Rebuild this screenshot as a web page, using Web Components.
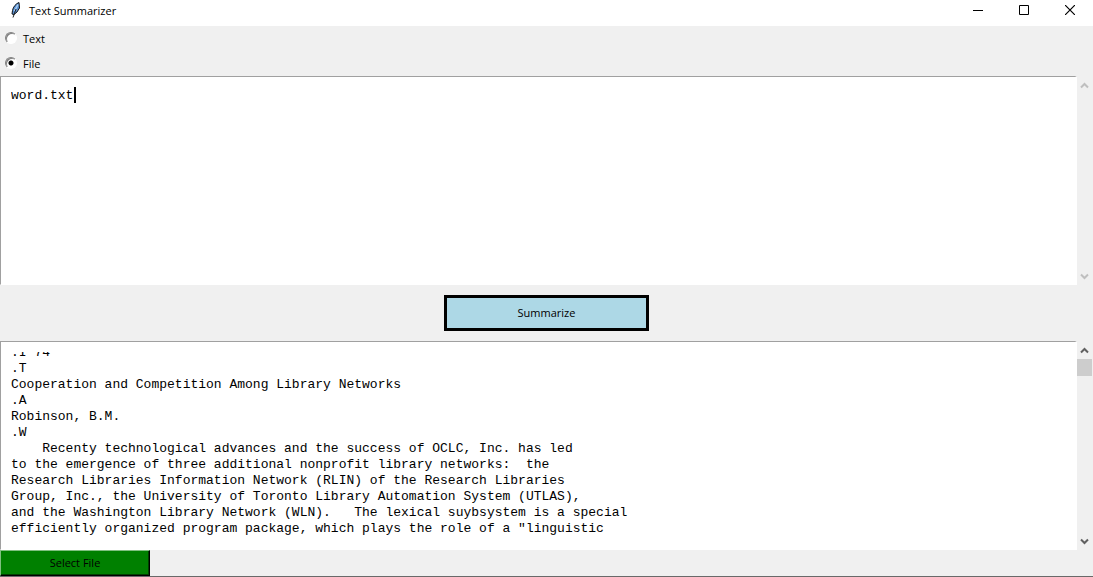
<!DOCTYPE html>
<html lang="en">
<head>
<meta charset="utf-8">
<title>Text Summarizer</title>
<style>
  body { margin: 0; background: #f0f0f0; color: #000; font: 11px/16px "Open Sans", "Noto Sans", sans-serif; }
</style>
</head>
<body>
<summarizer-app></summarizer-app>
<script>
class BaseElement extends HTMLElement {
  constructor() {
    super();
    this.attachShadow({ mode: 'open' }).innerHTML =
      '<style>*{box-sizing:border-box}button{font:inherit;color:inherit;padding:0;margin:0;border:0;border-radius:0}</style>' + this.template();
  }
}

customElements.define('title-bar', class extends BaseElement {
  template() {
    return `<style>
      :host { display: flex; align-items: flex-start; height: 26px; padding-left: 8px; background: #fff; }
      .icon { width: 16px; height: 16px; margin: 2px 5px 0 0; }
      h1 { flex: 1; margin: 3px 0 0; font: inherit; }
      button { width: 46px; height: 20px; background: none; display: grid; place-items: center; }
    </style>
    <svg class="icon" viewBox="0 0 16 16" aria-hidden="true">
      <path d="M11 .5C8 1.500 5 5 4.500 8.500L4 12l2 .500 3-2.500L11.500 6z" fill="#5a8fd0" stroke="#101418" stroke-width="1"/>
      <path d="M10 2.500 6.500 9" stroke="#a9d0f5" stroke-width="1.500"/>
      <path d="M8 7 5 15.500" stroke="#222" stroke-width="1"/>
    </svg>
    <h1><slot></slot></h1>
    <button aria-label="Minimize"><svg width="10" height="10"><path d="M0 5.500h10" stroke="#000"/></svg></button>
    <button aria-label="Maximize"><svg width="10" height="10"><path d="M.500.500h9v9h-9z" fill="none" stroke="#000"/></svg></button>
    <button aria-label="Close"><svg width="10" height="10"><path d="M0 0 10 10M10 0 0 10" stroke="#000" stroke-width="1.200"/></svg></button>`;
  }
});

customElements.define('source-options', class extends BaseElement {
  template() {
    return `<style>
      :host { display: block; }
      label { display: flex; align-items: center; gap: 6px; height: 25px; padding-left: 5px; }
      input { appearance: none; width: 12px; height: 12px; margin: 0 0 2px; border: 1px solid; border-color: #808080 #fff #fff #808080;
        border-radius: 50%; background: #fff; box-shadow: inset 1px 1px #808080; }
      input:checked { background: radial-gradient(circle, #000 2px, #fff 3px); }
    </style>
    <label><input type="radio" name="source" value="text">Text</label>
    <label><input type="radio" name="source" value="file" checked>File</label>`;
  }
});

customElements.define('scroll-rail', class extends BaseElement {
  template() {
    return `<style>
      :host { display: flex; flex-direction: column; width: 16px; padding-top: 1px; color: #606060; }
      :host([disabled]) { color: #bfbfbf; }
      button { height: 17px; width: 15px; background: none; display: grid; place-items: center; }
      .track { flex: 1; }
      .thumb { width: 15px; height: 17px; background: #cdcdcd; }
      :host([disabled]) .thumb { display: none; }
      path { fill: none; stroke: currentColor; stroke-width: 2; }
    </style>
    <button aria-label="Scroll up"><svg width="9" height="7"><path d="M1 5.500 4.500 2 8 5.500"/></svg></button>
    <div class="track"><div class="thumb"></div></div>
    <button aria-label="Scroll down"><svg width="9" height="7"><path d="M1 1.500 4.500 5 8 1.500"/></svg></button>`;
  }
});

customElements.define('text-pane', class extends BaseElement {
  template() {
    return `<style>
      :host { display: flex; min-height: 0; }
      .field { position: relative; flex: 1; display: flex; padding: 10px; background: #fff;
        border: 1px solid; border-color: #a0a0a0 #fff #fff #a0a0a0; border-right-width: 2px; }
      textarea { flex: 1; min-width: 0; margin: 0; padding: 1px 0 0; border: 0; outline: 0; resize: none; overflow: hidden;
        background: none; color: #000; white-space: pre; font: 13px/16px "Liberation Mono", "Courier New", monospace; }
      .caret { position: absolute; left: 73px; top: 10px; width: 2px; height: 16px; background: #000; }
      :host(:not([active])) .caret { display: none; }
    </style>
    <div class="field"><textarea spellcheck="false"></textarea><span class="caret"></span></div>
    <scroll-rail></scroll-rail>`;
  }
  connectedCallback() {
    const area = this.shadowRoot.querySelector('textarea');
    area.setAttribute('aria-label', this.getAttribute('label'));
    area.value = this.textContent;
    area.scrollTop = Number(this.getAttribute('scroll') || 0);
    if (this.hasAttribute('active')) this.shadowRoot.querySelector('scroll-rail').setAttribute('disabled', '');
  }
});

customElements.define('action-button', class extends BaseElement {
  template() {
    return `<style>
      :host { display: block; }
      button { display: block; width: 205px; height: 36px; background: #add8e6; border: 3px solid #000; }
      :host([variant="file"]) button { width: 150px; height: 26px; background: #008000;
        border: 1px solid; border-color: #80c080 #000 #000 #80c080; box-shadow: inset -1px -1px #004000; }
    </style>
    <button type="button"><slot></slot></button>`;
  }
});

customElements.define('summarizer-app', class extends BaseElement {
  template() {
    return `<style>
      :host { display: flex; flex-direction: column; height: 100vh; box-sizing: border-box; border-bottom: 1px solid #696969; }
      text-pane { flex: 1; }
      .actions { display: flex; justify-content: center; padding: 10px 0; }
      .footer { display: flex; }
    </style>
    <title-bar>Text Summarizer</title-bar>
    <source-options></source-options>
    <text-pane label="Input" active>word.txt</text-pane>
    <div class="actions"><action-button>Summarize</action-button></div>
    <text-pane label="Summary" scroll="8">.I 74
.T
Cooperation and Competition Among Library Networks
.A
Robinson, B.M.
.W
    Recenty technological advances and the success of OCLC, Inc. has led
to the emergence of three additional nonprofit library networks:  the
Research Libraries Information Network (RLIN) of the Research Libraries
Group, Inc., the University of Toronto Library Automation System (UTLAS),
and the Washington Library Network (WLN).   The lexical suybsystem is a special
efficiently organized program package, which plays the role of a "linguistic
</text-pane>
    <div class="footer"><action-button variant="file">Select File</action-button></div>`;
  }
});
</script>
</body>
</html>
